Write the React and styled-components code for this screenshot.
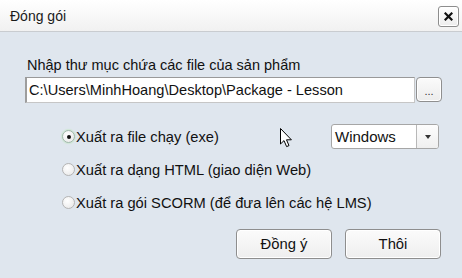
import React from "react";
import styled, { createGlobalStyle } from "styled-components";

const Global = createGlobalStyle`
  html, body { margin: 0; padding: 0; }
  body { width: 462px; height: 278px; overflow: hidden; font-family: "Liberation Sans", Arial, sans-serif; }
`;

const Dialog = styled.div`
  position: relative;
  width: 462px;
  height: 278px;
  background: #dfe6ee;
  display: flex;
  flex-direction: column;
  color: #111;
`;

const TitleBar = styled.div`
  height: 32px;
  box-sizing: border-box;
  border-bottom: 1px solid #c9ccd0;
  background: linear-gradient(#ffffff, #f1f1f1);
  display: flex;
  align-items: center;
  justify-content: space-between;
  padding: 0 3px 0 10px;
`;

const Title = styled.span`
  font-size: 14px;
  color: #1a1a1a;
`;

const CloseButton = styled.div`
  width: 21px;
  height: 21px;
  box-sizing: border-box;
  border: 1px solid #8d8d8d;
  border-radius: 3px;
  background: linear-gradient(#ffffff, #ececec);
  box-shadow: inset 0 0 0 1px #fff;
  display: flex;
  align-items: center;
  justify-content: center;
  margin-top: 1px;
`;

const Body = styled.div`
  flex: 1;
  display: flex;
  flex-direction: column;
  padding: 25px 0 0 25px;
`;

const Label = styled.div`
  font-size: 14.5px;
  line-height: 16px;
  margin-left: 2px;
`;

const PathRow = styled.div`
  display: flex;
  align-items: flex-start;
  margin-top: 4px;
  gap: 1px;
`;

const PathInput = styled.div`
  width: 390px;
  height: 26px;
  box-sizing: border-box;
  background: #fff;
  border: 1px solid #c6c6c6;
  border-top-color: #999;
  border-left: 2px solid #9d9d9d;
  font-size: 14.6px;
  line-height: 24px;
  padding-left: 2px;
  white-space: nowrap;
  overflow: hidden;
`;

const SmallButton = styled.div`
  width: 26px;
  height: 25px;
  box-sizing: border-box;
  border: 1px solid #8f8f8f;
  border-radius: 4px;
  background: linear-gradient(#fbfbfb, #ececec);
  box-shadow: inset 0 0 0 1px #fff;
  font-size: 11px;
  color: #333;
  display: flex;
  align-items: flex-end;
  justify-content: center;
  padding-bottom: 5px;
  line-height: 10px;
`;

const Options = styled.div`
  display: flex;
  flex-direction: column;
  padding-left: 37px;
  margin-top: 17px;
`;

const OptionRow = styled.div`
  display: flex;
  align-items: center;
  height: 33px;
  gap: 8px;
`;

const Radio = styled.span`
  width: 13px;
  height: 13px;
  box-sizing: border-box;
  border-radius: 50%;
  border: 1px solid ${(p) => (p.$checked ? "#9fb8a8" : "#b4b4b4")};
  background: radial-gradient(circle at 40% 35%, #ffffff, #e6e6e6);
  box-shadow: ${(p) => (p.$checked ? "0 0 1px 1px #cfe7d4" : "none")};
  display: flex;
  align-items: center;
  justify-content: center;
  flex-shrink: 0;
  &::after {
    content: "";
    display: ${(p) => (p.$checked ? "block" : "none")};
    width: 4px;
    height: 4px;
    border-radius: 50%;
    background: #111;
  }
`;

const OptionText = styled.span`
  font-size: 14.7px;
  line-height: 16px;
  margin-left: -7px;
  white-space: nowrap;
`;

const Select = styled.div`
  margin-left: auto;
  margin-right: 23px;
  width: 108px;
  height: 25px;
  box-sizing: border-box;
  border: 1px solid #a6a6a6;
  border-radius: 3px;
  background: #fff;
  display: flex;
  align-items: stretch;
`;

const SelectValue = styled.span`
  flex: 1;
  font-size: 15px;
  line-height: 23px;
  padding-left: 3px;
  border-right: 1px solid #b8b8b8;
`;

const SelectArrow = styled.span`
  width: 21px;
  display: flex;
  align-items: center;
  justify-content: center;
  background: linear-gradient(#fdfdfd, #efefef);
  border-radius: 0 2px 2px 0;
  &::after {
    content: "";
    border-left: 3.5px solid transparent;
    border-right: 3.5px solid transparent;
    border-top: 4px solid #333;
    margin-top: 1px;
  }
`;

const Footer = styled.div`
  display: flex;
  justify-content: flex-end;
  gap: 13px;
  padding-right: 21px;
  margin-top: 10px;
`;

const Button = styled.div`
  width: 96px;
  height: 30px;
  box-sizing: border-box;
  border: 1px solid #8e8e8e;
  border-radius: 4px;
  background: linear-gradient(#fbfbfb, #eeeeee);
  box-shadow: inset 0 0 0 1px #fff;
  font-size: 14.8px;
  display: flex;
  align-items: center;
  justify-content: center;
`;

const Cursor = styled.svg`
  position: absolute;
  left: 280px;
  top: 128px;
`;

export default function App() {
  return (
    <>
      <Global />
      <Dialog>
        <TitleBar>
          <Title>Đóng gói</Title>
          <CloseButton>
            <svg width="9" height="9" viewBox="0 0 9 9">
              <path d="M1.5 1.5 L7.5 7.5 M7.5 1.5 L1.5 7.5" stroke="#111" strokeWidth="2.2" strokeLinecap="square" />
            </svg>
          </CloseButton>
        </TitleBar>
        <Body>
          <Label>Nhập thư mục chứa các file của sản phẩm</Label>
          <PathRow>
            <PathInput>C:\Users\MinhHoang\Desktop\Package - Lesson</PathInput>
            <SmallButton>...</SmallButton>
          </PathRow>
          <Options>
            <OptionRow>
              <Radio $checked />
              <OptionText>Xuất ra file chạy (exe)</OptionText>
              <Select>
                <SelectValue>Windows</SelectValue>
                <SelectArrow />
              </Select>
            </OptionRow>
            <OptionRow>
              <Radio />
              <OptionText>Xuất ra dạng HTML (giao diện Web)</OptionText>
            </OptionRow>
            <OptionRow>
              <Radio />
              <OptionText>Xuất ra gói SCORM (để đưa lên các hệ LMS)</OptionText>
            </OptionRow>
          </Options>
          <Footer>
            <Button>Đồng ý</Button>
            <Button>Thôi</Button>
          </Footer>
        </Body>
        <Cursor width="13" height="20" viewBox="0 0 13 20">
          <path d="M0.5 0.5 L0.5 16 L4 12.6 L6.6 18.6 L9 17.6 L6.5 11.8 L11.4 11.8 Z" fill="#fff" stroke="#000" strokeWidth="1" strokeLinejoin="miter" />
        </Cursor>
      </Dialog>
    </>
  );
}
